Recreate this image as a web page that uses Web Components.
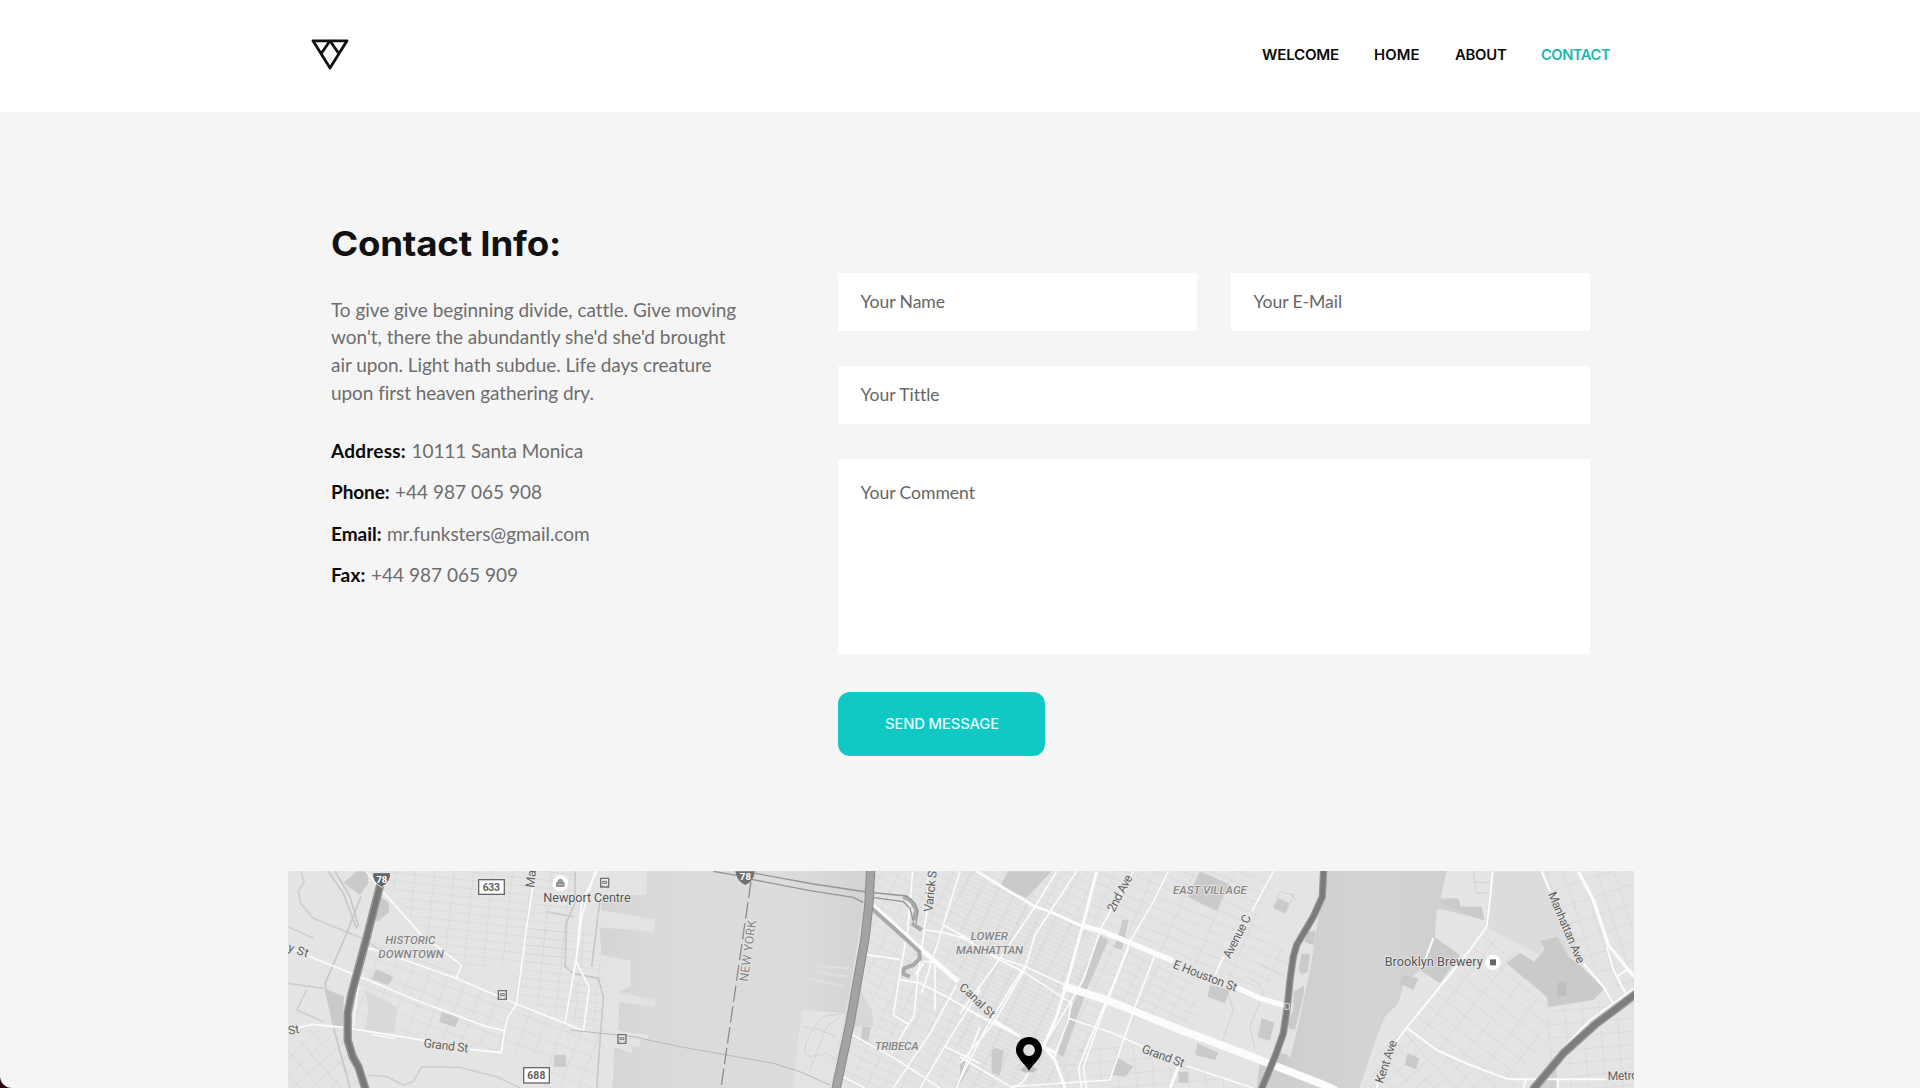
<!DOCTYPE html>
<html lang="en">
<head>
<meta charset="utf-8">
<title>Contact</title>
<style>
html,body{margin:0;height:100%;background:#24030f;overflow:hidden}
</style>
</head>
<body>
<contact-page></contact-page>
<script>
const define = (name, html, after) => {
  const t = document.createElement('template');
  t.innerHTML = html;
  customElements.define(name, class extends HTMLElement {
    constructor() {
      super();
      this.attachShadow({ mode: 'open' }).append(t.content.cloneNode(true));
    }
    connectedCallback() { if (after) after.call(this); }
  });
};

/* A single line of text set to the width "w"; "sx" widens the glyphs, tracking does the rest */
define('fit-line', `<style>:host{display:block;white-space:nowrap}span{display:inline-block;transform-origin:0 50%}</style><span><slot></slot></span>`, function () {
  const s = this.shadowRoot.querySelector('span');
  const n = this.textContent.length;
  const target = +this.getAttribute('w');
  const sx = +(this.getAttribute('sx') || 1);
  const w = s.getBoundingClientRect().width;
  if (w) s.style.letterSpacing = ((target / sx - w) / n).toFixed(3) + 'px';
  if (sx !== 1) s.style.transform = `scaleX(${sx})`;
  this.style.width = target + 'px';
});

define('brand-logo', `<style>:host{display:block;width:38px;height:32px}svg{display:block}</style>
<svg width="38" height="32" viewBox="0 0 38 32" fill="none" stroke="#111" stroke-width="2.8" stroke-linejoin="round"><path d="M2 1.800H36L19 29ZM10.600 14L19 1.800L27.400 14"/></svg>`);

define('nav-item', `<style>:host{display:block;color:#0b0b0b;font:600 14px/20px Inter,sans-serif}:host([active]){color:#17b9b0}</style><slot></slot>`);

define('site-header', `<style>
:host{display:flex;height:112px;box-sizing:border-box;padding:0 310px 2px 311px;align-items:center;justify-content:space-between;background:#fff}
nav{display:flex;gap:34.9px}</style>
<brand-logo></brand-logo>
<nav><nav-item><fit-line w="77" sx="1.08">WELCOME</fit-line></nav-item><nav-item><fit-line w="45.5" sx="1.06">HOME</fit-line></nav-item><nav-item><fit-line w="51.5" sx="1.06">ABOUT</fit-line></nav-item><nav-item active><fit-line w="69" sx="1.05">CONTACT</fit-line></nav-item></nav>`);

define('info-row', `<style>:host{display:flex;gap:5.5px;font:19px/41.55px Lato,sans-serif;color:#6d6d6d}::slotted([slot=label]){font-weight:700;color:#090909}</style><slot name="label"></slot><slot></slot>`);

define('contact-info', `<style>
:host{display:block;width:420px}
h1{margin:0 0 32px;font:700 34px/40px Inter,sans-serif;color:#111}
.p{margin-bottom:23.4px;font:19px/27.7px Lato,sans-serif;color:#6d6d6d}</style>
<h1><fit-line w="230" sx="1.08">Contact Info:</fit-line></h1>
<div class="p"><fit-line w="404.5">To give give beginning divide, cattle. Give moving</fit-line><fit-line w="394.5">won't, there the abundantly she'd she'd brought</fit-line><fit-line w="380.5">air upon. Light hath subdue. Life days creature</fit-line><fit-line w="262.500">upon first heaven gathering dry.</fit-line></div>
<info-row><fit-line slot="label" w="75">Address:</fit-line><fit-line w="171.5">10111 Santa Monica</fit-line></info-row>
<info-row><fit-line slot="label" w="58.5">Phone:</fit-line><fit-line w="147">+44 987 065 908</fit-line></info-row>
<info-row><fit-line slot="label" w="50.5">Email:</fit-line><fit-line w="202.5">mr.funksters@gmail.com</fit-line></info-row>
<info-row><fit-line slot="label" w="34.5">Fax:</fit-line><fit-line w="147">+44 987 065 909</fit-line></info-row>`);

define('form-field', `<style>:host{display:block;box-sizing:border-box;height:57.7px;flex:1;padding:14px 22.5px;background:#fff;color:#666;font:17.6px/29px Lato,sans-serif}
:host([area]){height:195.5px;padding-top:19.5px}</style><slot></slot>`);

define('send-button', `<style>:host{display:flex;width:207px;height:63.500px;border-radius:12px;background:#10c8c4;color:#e2fffc;font:500 14px/20px Inter,sans-serif;align-items:center;justify-content:center}</style><slot></slot>`);

define('contact-form', `<style>
:host{display:flex;flex-direction:column;width:752px;gap:35px}
.row{display:flex;gap:34px}form-field{flex:none}.row form-field{flex:1}
send-button{margin-top:3px}</style>
<div class="row"><form-field><fit-line w="84.5">Your Name</fit-line></form-field><form-field><fit-line w="88.5">Your E-Mail</fit-line></form-field></div>
<form-field><fit-line w="78.5">Your Tittle</fit-line></form-field>
<form-field area><fit-line w="114.5">Your Comment</fit-line></form-field>
<send-button><fit-line w="114" sx="1.06">SEND MESSAGE</fit-line></send-button>`);

define('city-map', `<style>
:host{display:block;width:1346px;height:217px}svg{display:block}
text{font-family:Roboto,sans-serif;fill:#606060;stroke:#eaeaea;stroke-width:5px;paint-order:stroke;stroke-linejoin:round}
.area{fill:#858585;font-style:italic;font-weight:500}
.r{fill:none;stroke:#fcfcfc;stroke-linejoin:round}
.k{fill:#cacaca}.f{fill:none;stroke:#cecece;stroke-width:2.5}.l{fill:#e3e3e3}
.h{fill:none;stroke:#888;stroke-linejoin:round}
</style>
<svg width="1346" height="217" viewBox="288 871 1346 217">
<defs>
<pattern id="ga" width="58" height="25" patternUnits="userSpaceOnUse" patternTransform="rotate(6)"><path d="M0 0H58M0 0V25" class="f"/></pattern>
<pattern id="gb" width="54" height="43" patternUnits="userSpaceOnUse" patternTransform="rotate(21)"><path d="M0 0H54M0 0V43" class="f"/></pattern>
<pattern id="gc" width="46" height="38" patternUnits="userSpaceOnUse" patternTransform="rotate(-42)"><path d="M0 0H46M0 0V38" class="f"/></pattern>
<pattern id="gd" width="48" height="27" patternUnits="userSpaceOnUse" patternTransform="rotate(26)"><path d="M0 0H48M0 0V27" class="f"/></pattern>
<pattern id="ge" width="110" height="33" patternUnits="userSpaceOnUse" patternTransform="rotate(23)"><path d="M0 0H110M0 0V33" class="f"/></pattern>
<pattern id="gf" width="70" height="44" patternUnits="userSpaceOnUse" patternTransform="rotate(38)"><path d="M0 0H70M0 0V44" class="f"/></pattern>
<pattern id="gg" width="48" height="55" patternUnits="userSpaceOnUse" patternTransform="rotate(-18)"><path d="M0 0H48M0 0V55" class="f"/></pattern>
<pattern id="gh" width="52" height="40" patternUnits="userSpaceOnUse" patternTransform="rotate(-5)"><path d="M0 0H52M0 0V40" class="f"/></pattern>
<linearGradient id="w1"><stop offset="0" stop-color="#d4d4d4"/><stop offset=".2" stop-color="#dadada"/><stop offset=".7" stop-color="#dcdcdc"/><stop offset="1" stop-color="#d3d3d3"/></linearGradient>
<linearGradient id="w2"><stop offset="0" stop-color="#cdcdcd"/><stop offset=".5" stop-color="#d3d3d3"/><stop offset="1" stop-color="#cecece"/></linearGradient>
</defs>
<rect x="288" y="871" width="1346" height="217" fill="#e4e4e4"/>

<!-- Land, water, parks -->
<g transform="translate(280 860) scale(.33333)">
<path fill="url(#ga)" d="M310 30H890L850 310L540 320L420 220Z"/>
<path fill="url(#gb)" d="M240 230L530 340L710 420L980 510L960 684H790L800 600L660 575L560 545L270 515L220 500Z"/>
<path fill="url(#gc)" d="M24 510L190 510L200 560L250 684H24Z"/>
<path fill="url(#ga)" d="M740 200H950L980 330V510L700 410Z"/>
<path class="f" style="stroke-width:5" d="M62 30L72 65L55 95L62 130L100 175L185 210L240 232L300 270M800 155L880 170"/>
<path class="f" style="stroke-width:5;stroke:#c8c8c8" d="M145 34L190 100L230 205M165 34L210 110L236 200M243 110L200 220L135 370L165 520L210 684M885 34V130L860 185L855 320L880 340L955 355L970 410L950 684M960 120L935 320"/>
<path class="f" style="stroke-width:5" d="M265 646L320 650L370 675L400 665L425 620L540 622L650 650L720 684M24 200L100 235M24 370L130 385M80 390L50 450L130 485"/>
<path class="k" d="M190 68L232 34H262L265 70L240 104ZM298 110L325 125L328 155L292 185L280 172ZM288 328L340 350L325 376L275 357ZM132 384L192 410L188 500L160 496ZM486 456L538 475L525 502L477 485ZM823 584H858V620H821Z"/>
<path d="M255 390L350 440L345 520L255 510L265 450Z" fill="#d9d9d9"/>
<path fill="url(#w1)" d="M1010 30H1770L1660 684H998L1003 550L1080 560L1080 525L1015 510L1018 423H1120L1125 440L1128 425L1010 400L1050 380V302L965 285L958 200L1120 215L1125 180L965 150V105L1098 104L1100 34Z"/>
<path class="l" d="M1000 30H1094L1100 95L1085 105L985 95ZM955 160L1125 178L1122 215L955 202ZM960 290L1052 302V380L975 377ZM1010 395L1125 420V440L1010 425ZM1000 510L1105 525L1104 538L1055 545V580L1000 560ZM1565 450L1700 460L1665 684H1538Z"/>
</g>
<g transform="translate(620 860) scale(.33333)">
<path class="f" d="M590 318L685 325M590 335L680 350M565 355L670 378" style="stroke:#dfdfdf;stroke-width:8"/>
<path class="f" d="M670 460L610 470L575 510L558 550L555 580L570 590L620 580L650 600M550 500L600 510L650 530M570 630L620 500L660 470"/>
<path fill="url(#gd)" d="M765 34H1080L1420 200L1330 684H650L690 520L765 530L768 430L730 420Z"/>
<path class="k" d="M727 500H753L745 545H722ZM1035 600L1050 620L1030 655L1010 684Z"/>
<path d="M722 390L755 450L763 500L700 500Z" fill="#d8d8d8"/>
</g>
<g transform="translate(960 860) scale(.33333)">
<path fill="url(#gd)" d="M0 34H410L380 200L700 360L720 480L600 500L440 440L320 680H0Z"/>
<path fill="url(#ge)" d="M410 34H940L890 160L1000 310L880 400L640 310L370 200Z"/>
<path fill="url(#gh)" d="M310 560L520 560L800 660V684H310Z"/>
<path class="f" d="M870 355L895 370L910 395L890 450L870 500L885 570M800 390L820 450L785 550M900 315L975 350M960 95L1003 105L975 160L940 140Z"/>
<path class="k" d="M145 34H275L200 113L120 80ZM720 34L807 72L770 153L684 110ZM487 180H506L485 270L460 262L475 230ZM420 225L445 240L380 390L310 590L293 580L320 480L370 360ZM955 115L988 130L975 160L940 145ZM750 375L810 390L795 430L743 410ZM905 475L943 488L930 543L893 530ZM712 550L775 578L765 600L706 585ZM468 590L520 620L495 650L455 645ZM95 572L105 563L131 572L120 645L95 640ZM655 635H685V668H655ZM0 600L25 605L0 645Z"/>
</g>
<g transform="translate(1290 860) scale(.33333)">
<path fill="url(#w2)" d="M106 30H470L452 115L500 115L512 140L570 140L582 180L548 170L455 148L440 150L435 230L395 325L340 375L325 430L285 470L260 530L208 684H-100L-90 600L0 590L60 330Z"/>
<path class="l" d="M105 34L100 110L60 210L10 280L-5 430L-30 560L0 590L22 510L62 320L90 130Z"/>
<path class="k" d="M52 215L76 213L72 255L43 247ZM35 280L60 282L53 337L32 342L27 325ZM10 395L42 378V400L15 510L-5 505V480L10 450ZM-30 578L-6 585L-20 618L-45 610Z"/>
<path d="M607 34H755L780 95L860 240L840 330L720 270L585 200Z" fill="#dcdcdc"/>
<path class="k" d="M445 125L505 115L512 140L575 140L583 180L550 172ZM435 232L510 285L450 370L382 325ZM340 345L385 355L370 390L330 370ZM650 310L690 278L732 305L765 268L750 243L803 230L835 290L870 315L942 387L910 420L775 441L770 410Z"/>
<path d="M806 365H830V408H800Z" fill="#bfbfbf"/>
<path fill="url(#gf)" d="M590 205L690 275L655 310L775 420L780 540L735 615L650 655L540 615L440 570L350 505Z"/>
<path fill="url(#gc)" d="M350 510L440 575L650 658L700 684H235L262 550Z"/>
<path fill="url(#gg)" d="M760 34H1032V400L970 380L880 310Z"/>
<path fill="url(#gh)" d="M775 440L970 420L800 600H770ZM830 600L1032 420V684H750Z"/>
<path class="k" d="M352 580L388 595L378 628L345 615Z"/><path d="M745 684L800 610V684Z" fill="#d1d1d1"/>
<path class="f" d="M550 34L558 100L600 98M555 65L605 70M0 100L18 120"/>
</g>

<!-- Roads -->
<g transform="translate(280 860) scale(.33333)">
<path class="r" stroke-width="5" d="M258 34L300 85L420 220L545 316L528 355M24 262L90 290L240 350L420 425L620 500L672 512M262 265L290 270L528 355L710 432L855 490L910 512L928 382L888 305L905 170L945 34M950 34L905 130L888 300L855 490M765 34L740 200L710 432L684 470L674 510L664 578L570 568M45 505L95 493L190 502L450 544"/>
<path class="r" stroke-width="4" d="M238 350L220 500M276 524L345 536"/>
<path class="h" stroke-width="3" style="stroke:#b8b8b8" d="M870 510L1060 530L1200 560L1340 585L1480 610L1560 635L1650 675"/>
<path class="h" style="stroke:#929292" stroke-width="25" d="M302 70L262 225L215 400L203 460V540L218 590L235 620L258 692"/>
<path class="h" style="stroke:#777" stroke-width="15" d="M302 70L262 225L215 400L203 460V540L218 590L235 620L258 692"/>
</g>
<g transform="translate(620 860) scale(.33333)">
<path class="r" stroke-width="5" d="M878 34L863 210L840 340L820 465L865 492L882 470L893 350L920 160L925 34M865 492L815 580M730 283L840 298M915 210L970 218L1040 236M970 195L1060 245M1020 34L970 195L905 400M835 358L900 370L980 410L1080 470M910 305H945V450M690 520L815 590L960 684M665 648L735 684M1010 375L930 520L820 684M1080 390L980 550L900 684M975 560L1080 610M1080 500L1010 684"/>
<path class="r" stroke-width="15" d="M745 125L850 220L940 300L1015 365"/>
<path class="h" style="stroke:#aaa" stroke-width="12" d="M755 145L850 230L898 275L900 295L880 315L852 325L850 342L870 350M880 180L890 150L870 120L850 110M875 190L905 210"/>
<path class="r" stroke-width="7" d="M910 310L885 345"/>
<path class="h" style="stroke:#959595" stroke-width="4" d="M280 34L350 46M395 38L580 72L740 96L860 108L885 130L894 155L888 190M395 58L570 92L700 112L735 130M740 110L850 125L870 145L880 185"/>
<path class="h" style="stroke:#8c8c8c" stroke-width="4" stroke-dasharray="49 14" d="M393 65L303 684"/>
<path class="r" style="stroke:#ddd" stroke-width="5" d="M734 110L720 260L670 500L635 684"/>
<path class="h" style="stroke:#8b8b8b" stroke-width="28" d="M752 30L747 130L735 235L690 490L648 688"/>
<path class="h" style="stroke:#a3a3a3" stroke-width="22" d="M752 30L747 130L735 235L690 490L648 688"/>
</g>
<g transform="translate(960 860) scale(.33333)">
<path class="r" stroke-width="5" d="M290 34L225 140L110 310L0 460M350 34L270 155L225 225L200 310L80 500L0 660M520 34L425 200L370 360L250 560M0 230L110 290L190 318L315 375M80 280L190 335L335 430M625 34L580 125L510 245L465 360L405 500L355 625L365 684M505 265L420 480L370 620L378 684M583 290L525 440L470 600L450 660L150 680M200 318L100 490L0 610M325 475L460 520L560 565M680 618L880 684M0 435L110 495L180 530M0 590L100 650L160 684M210 630L190 665L160 684M335 425L325 480L280 600M940 34L875 155M790 290L765 345"/>
<path class="r" stroke-width="9" d="M410 34L370 190L320 370L290 470L250 560L285 600L315 684M50 34L150 95L225 140L270 155L370 200M100 480L180 530M655 620L630 684M250 560L290 580"/>
<path class="r" stroke-width="16" d="M365 197L430 215L640 303M830 382L900 415L980 438"/>
<path class="r" stroke-width="23" d="M310 378L440 420L650 505L850 580L1080 670L1130 692"/>
<path class="h" style="stroke:#999" stroke-width="22" d="M1091 30L1087 110L1060 170L1010 255L1000 290L990 360L982 440L970 520L945 590L904 688"/>
<path class="h" style="stroke:#7b7b7b" stroke-width="15" d="M1091 30L1087 110L1060 170L1010 255L1000 290L990 360L982 440L970 520L945 590L904 688"/>
<path fill="none" stroke="#ddd" stroke-width="3" d="M975 430H988V448H975Z"/>
</g>
<g transform="translate(1290 860) scale(.33333)">
<path class="r" stroke-width="6" d="M608 34L600 120L590 200L540 270L350 503L315 550M350 503L440 570L540 615L655 658H950M755 34L780 95M880 310L940 380L970 430M950 260L970 330L1010 405M980 350L1010 330M430 235L395 325M708 660L700 684M803 660V684M262 670V684"/>
<path class="r" stroke-width="10" d="M865 34L910 120L955 255L1032 350"/>
<path class="r" stroke-width="5" d="M795 590L900 480L1032 385"/>
<path class="h" style="stroke:#a0a0a0" stroke-width="26" d="M1040 400L920 490L820 580L728 690"/>
<path class="h" style="stroke:#7d7d7d" stroke-width="18" d="M1040 400L920 490L820 580L728 690"/>
</g>

<!-- Labels and markers -->
<g transform="translate(280 860) scale(.33333)" font-size="37">
<path d="M278 38H332Q334 65 305 82Q274 65 278 38Z" fill="#666" stroke="#eee" stroke-width="3"/>
<text x="289" y="68" font-size="29" style="fill:#fff;stroke:none;font-weight:700" textLength="33">78</text>
<g fill="#fff" stroke="#686868" stroke-width="4"><rect x="596" y="59" width="77" height="44"/><rect x="731" y="623" width="77" height="46"/></g>
<text x="608" y="92" font-size="31" style="font-weight:700;stroke:none" textLength="52">633</text><text x="742" y="657" font-size="31" style="font-weight:700;stroke:none" textLength="54">688</text>
<text transform="translate(762 84) rotate(-83)">Mai</text>
<circle cx="841" cy="70" r="24" fill="#fff"/><path d="M830 68H852V79H830ZM835 67V61Q841 55 847 61V67" fill="#aaa" stroke="#777" stroke-width="3"/>
<text x="790" y="127" font-size="38" textLength="262" style="fill:#555">Newport Centre</text>
<text class="area" x="316" y="253" font-size="35" textLength="150">HISTORIC</text><text class="area" x="295" y="295" font-size="35" textLength="196">DOWNTOWN</text>
<text transform="translate(22 272) rotate(19)" font-size="36" textLength="62">y St</text>
<text transform="translate(26 524) rotate(-9)" font-size="36">St</text>
<text transform="translate(430 561) rotate(7)" textLength="134">Grand St</text>
<g fill="#ededed" stroke="#707070" stroke-width="4"><path d="M962 55H986V81H962ZM655 392H679V418H655ZM1014 524H1038V550H1014Z"/><path d="M968 64H980V70H968ZM661 401H673V407H661ZM1020 533H1032V539H1020ZM967 77V75M981 77V75M660 414V412M674 414V412M1019 546V544M1033 546V544" stroke-width="3"/></g>
</g>
<g transform="translate(620 860) scale(.33333)" font-size="37">
<path d="M346 34H404Q402 64 376 75Q350 64 346 34Z" fill="#707070"/>
<text x="359" y="60" font-size="29" style="fill:#fff;stroke:none;font-weight:700" textLength="34">78</text>
<text class="area" transform="translate(383 366) rotate(-82)" font-size="37" textLength="185" style="font-style:normal;font-weight:400">NEW YORK</text>
<text transform="translate(937 157) rotate(-84)" textLength="124">Varick S</text>
<text class="area" x="764" y="571" font-size="35" textLength="132">TRIBECA</text>
</g>
<g transform="translate(960 860) scale(.33333)" font-size="37">
<text class="area" x="32" y="241" font-size="35" textLength="112">LOWER</text><text class="area" x="-12" y="281" font-size="35" textLength="201">MANHATTAN</text>
<text class="area" x="639" y="103" font-size="35" textLength="222">EAST VILLAGE</text>
<text transform="translate(462 158) rotate(-62)" textLength="120">2nd Ave</text>
<text transform="translate(810 298) rotate(-63)" textLength="141">Avenue C</text>
<text transform="translate(637 323) rotate(21)" textLength="202">E Houston St</text>
<text transform="translate(543 577) rotate(20)" textLength="133">Grand St</text>
<path id="canal" d="M-5 388Q20 402 48 435Q66 454 110 490" fill="none"/>
<text font-size="36"><textPath href="#canal" textLength="132">Canal St</textPath></text>
<path d="M180 630Q207 645 232 630L215 618H195Z" fill="#bcbcbc"/>
<path fill="#000" fill-rule="evenodd" d="M207 632C194 612 168 593 168 570C168 547 186 531 207 531S246 547 246 570C246 593 220 612 207 632ZM207 553A17.500 17.500 0 1 0 207.100 553Z"/>
</g>
<g transform="translate(1290 860) scale(.33333)" font-size="37">
<circle cx="609" cy="307" r="23" fill="#fff"/><rect x="600" y="298" width="18" height="18" fill="#666"/>
<text x="284" y="317" font-size="38" textLength="294" style="fill:#555">Brooklyn Brewery</text>
<text transform="translate(773 102) rotate(67)" textLength="229">Manhattan Ave</text>
<text transform="translate(278 672) rotate(-71)" textLength="134">Kent Ave</text>
<text transform="translate(953 661) rotate(-2)" textLength="92">Metro</text>
</g>
</svg>`);

define('contact-page', `<style>
:host{display:flex;flex-direction:column;height:1088px;overflow:hidden;background:#f5f5f5;border-bottom-left-radius:12px}
site-header{flex:none}
main{display:flex;flex:none;height:759px;box-sizing:border-box;padding:111.500px 330px 0 331px;justify-content:space-between;align-items:flex-start}
contact-form{margin-top:49.800px}
city-map{flex:none;margin-left:288px}</style>
<site-header></site-header>
<main><contact-info></contact-info><contact-form></contact-form></main>
<city-map></city-map>`);
</script>
</body>
</html>
